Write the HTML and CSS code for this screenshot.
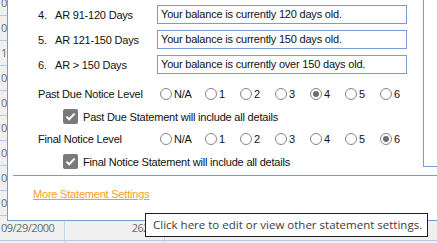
FILE: index.html
```html
<!DOCTYPE html>
<html>
<head>
<meta charset="utf-8">
<link rel="stylesheet" href="styles.css">
</head>
<body>
<div class="grid">
  <div class="row"><span class="cell c1">09/01/2000</span><span class="cell c2"></span><span class="cell c3"></span></div>
  <div class="row"><span class="cell c1">09/05/2000</span><span class="cell c2"></span><span class="cell c3"></span></div>
  <div class="row"><span class="cell c1">10/02/2000</span><span class="cell c2"></span><span class="cell c3"></span></div>
  <div class="row"><span class="cell c1">09/08/2000</span><span class="cell c2"></span><span class="cell c3"></span></div>
  <div class="row"><span class="cell c1">09/11/2000</span><span class="cell c2"></span><span class="cell c3"></span></div>
  <div class="row"><span class="cell c1">09/14/2000</span><span class="cell c2"></span><span class="cell c3"></span></div>
  <div class="row"><span class="cell c1">09/18/2000</span><span class="cell c2"></span><span class="cell c3"></span></div>
  <div class="row"><span class="cell c1">09/21/2000</span><span class="cell c2"></span><span class="cell c3"></span></div>
  <div class="row"><span class="cell c1">09/25/2000</span><span class="cell c2"></span><span class="cell c3"></span></div>
  <div class="row"><span class="cell c1">09/29/2000</span><span class="cell c2">262.50</span><span class="cell c3"></span></div>
  <div class="row"><span class="cell c1"></span><span class="cell c2"></span><span class="cell c3"></span></div>
</div>

<div class="panel">
  <div class="top">
    <div class="main">
      <div class="ar"><span class="num">4.</span><span class="lbl">AR 91-120 Days</span><div class="field">Your balance is currently 120 days old.</div></div>
      <div class="ar"><span class="num">5.</span><span class="lbl">AR 121-150 Days</span><div class="field">Your balance is currently 150 days old.</div></div>
      <div class="ar"><span class="num">6.</span><span class="lbl">AR &gt; 150 Days</span><div class="field">Your balance is currently over 150 days old.</div></div>

      <div class="level first">
        <span class="lname">Past Due Notice Level</span>
        <span class="opt wide"><span class="rb"></span>N/A</span>
        <span class="opt"><span class="rb"></span>1</span>
        <span class="opt"><span class="rb"></span>2</span>
        <span class="opt"><span class="rb"></span>3</span>
        <span class="opt"><span class="rb on"></span>4</span>
        <span class="opt"><span class="rb"></span>5</span>
        <span class="opt"><span class="rb"></span>6</span>
      </div>
      <div class="check">
        <span class="box"><svg width="15" height="15" viewBox="0 0 15 15"><path d="M3.5 7.6 L6.2 10.3 L11.6 4.6" fill="none" stroke="#fff" stroke-width="2"/></svg></span>
        Past Due Statement will include all details
      </div>

      <div class="level">
        <span class="lname">Final Notice Level</span>
        <span class="opt wide"><span class="rb"></span>N/A</span>
        <span class="opt"><span class="rb"></span>1</span>
        <span class="opt"><span class="rb"></span>2</span>
        <span class="opt"><span class="rb"></span>3</span>
        <span class="opt"><span class="rb"></span>4</span>
        <span class="opt"><span class="rb"></span>5</span>
        <span class="opt"><span class="rb on"></span>6</span>
      </div>
      <div class="check">
        <span class="box"><svg width="15" height="15" viewBox="0 0 15 15"><path d="M3.5 7.6 L6.2 10.3 L11.6 4.6" fill="none" stroke="#fff" stroke-width="2"/></svg></span>
        Final Notice Statement will include all details
      </div>
    </div>
    <div class="side"></div>
  </div>
  <div class="sep"></div>
  <a class="more">More Statement Settings</a>
</div>

<div class="tip">Click here to edit or view other statement settings.</div>
</body>
</html>
```

FILE: styles.css
```css
html, body {
  margin: 0;
  padding: 0;
}
body {
  width: 437px;
  height: 243px;
  overflow: hidden;
  position: relative;
  background: #f0f0f0;
}

/* background grid */
.grid {
  margin-top: -9px;
  height: 252px;
  overflow: hidden;
  font-family: "Open Sans", "Noto Sans", sans-serif;
  font-size: 11px;
  letter-spacing: -0.5px;
  color: #6b6b6b;
}
.row {
  display: grid;
  grid-template-columns: 65px 100px 1fr;
  height: 24px;
  border-bottom: 1px solid #b7c8e8;
  background: #f0f0f0;
}
.cell {
  line-height: 24px;
  white-space: nowrap;
  overflow: hidden;
}
.c1 {
  padding-left: 1px;
  border-right: 1px solid #c6d3ee;
}
.c2 {
  text-align: right;
  padding-right: 1px;
  border-right: 1px solid #c6d3ee;
}

/* dialog panel */
.panel {
  position: absolute;
  left: 7px;
  top: 0;
  right: -10px;
  height: 220px;
  background: #fff;
  border-left: 1px solid #7b9bd4;
  border-bottom: 1px solid #7b9bd4;
  font-family: "Liberation Sans", Arial, sans-serif;
  font-size: 11px;
  letter-spacing: -0.2px;
  color: #111;
}
.top {
  display: flex;
  align-items: flex-start;
}
.main {
  width: 415px;
  padding: 5px 0 0 30px;
  box-sizing: border-box;
}
.side {
  flex: 1;
  height: 166px;
  border-left: 1px solid #7b9bd4;
  border-bottom: 1px solid #7b9bd4;
}

.ar {
  display: flex;
  align-items: center;
  height: 19px;
  margin-bottom: 6px;
}
.num {
  width: 17px;
}
.lbl {
  width: 102px;
}
.field {
  width: 250px;
  height: 19px;
  box-sizing: border-box;
  border: 1px solid #7b9bd4;
  padding-left: 3px;
  line-height: 17px;
  white-space: nowrap;
}

.level {
  display: flex;
  align-items: center;
  height: 18px;
  margin-top: 6px;
}
.level.first {
  margin-top: 11px;
}
.lname {
  width: 122px;
}
.opt {
  display: flex;
  align-items: center;
  gap: 2px;
  width: 35px;
}
.opt.wide {
  width: 45px;
}
.rb {
  width: 12px;
  height: 12px;
  box-sizing: border-box;
  border: 1px solid #858585;
  border-radius: 50%;
  background: #fff;
  display: flex;
  align-items: center;
  justify-content: center;
}
.rb.on::after {
  content: "";
  width: 6px;
  height: 6px;
  border-radius: 50%;
  background: #6e6e6e;
}

.check {
  display: flex;
  align-items: center;
  gap: 5px;
  height: 15px;
  margin-top: 6px;
  padding-left: 25px;
}
.box {
  width: 15px;
  height: 15px;
  border-radius: 2px;
  background: #7a7a7a;
  display: block;
}
.box svg {
  display: block;
}

.sep {
  margin: 6px 0 0 5px;
  border-top: 1px solid #7b9bd4;
}
.more {
  display: block;
  margin: 12px 0 0 25px;
  line-height: 13px;
  color: #f9a01b;
  text-decoration: underline;
  width: max-content;
}

/* tooltip */
.tip {
  position: absolute;
  left: 145px;
  top: 213px;
  width: 283px;
  height: 24px;
  box-sizing: border-box;
  border: 1px solid #1e1e1e;
  background: #fff;
  padding-left: 7px;
  font-family: "Open Sans", "Noto Sans", sans-serif;
  font-size: 11.5px;
  line-height: 22px;
  color: #3c3c3c;
  white-space: nowrap;
}
```
